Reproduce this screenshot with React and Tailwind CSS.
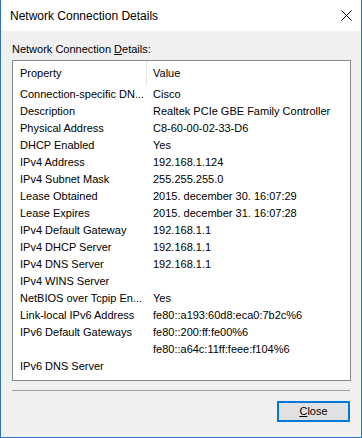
export default function App() {
  const rows = [
    ["Connection-specific DN...", "Cisco"],
    ["Description", "Realtek PCIe GBE Family Controller"],
    ["Physical Address", "C8-60-00-02-33-D6"],
    ["DHCP Enabled", "Yes"],
    ["IPv4 Address", "192.168.1.124"],
    ["IPv4 Subnet Mask", "255.255.255.0"],
    ["Lease Obtained", "2015. december 30. 16:07:29"],
    ["Lease Expires", "2015. december 31. 16:07:28"],
    ["IPv4 Default Gateway", "192.168.1.1"],
    ["IPv4 DHCP Server", "192.168.1.1"],
    ["IPv4 DNS Server", "192.168.1.1"],
    ["IPv4 WINS Server", ""],
    ["NetBIOS over Tcpip En...", "Yes"],
    ["Link-local IPv6 Address", "fe80::a193:60d8:eca0:7b2c%6"],
    ["IPv6 Default Gateways", "fe80::200:ff:fe00%6"],
    ["", "fe80::a64c:11ff:feee:f104%6"],
    ["IPv6 DNS Server", ""],
  ];
  return (
    <div
      className="w-[362px] h-[438px] flex flex-col bg-[#f0f0f0] border-l border-r border-b border-[#2f74c5] text-black"
      style={{ fontFamily: '"Liberation Sans", Arial, sans-serif' }}
    >
      <div className="h-[31px] bg-white flex items-center justify-between pl-[9px] pr-[9px] shrink-0">
        <span className="text-[12px] leading-none pt-[1px]">Network Connection Details</span>
        <svg width="11" height="11" viewBox="0 0 11 11" className="shrink-0">
          <path d="M0.5 0.5 L10.5 10.5 M10.5 0.5 L0.5 10.5" stroke="#000" strokeWidth="1" fill="none" />
        </svg>
      </div>
      <div className="flex flex-col pl-[11px] pr-[10px]">
        <div className="mt-[11px] h-[14px] text-[11px] leading-[14px]">
          Network Connection <span className="underline">D</span>etails:
        </div>
        <div className="mt-[4px] w-[339px] h-[321px] bg-white border border-[#828790] flex flex-col">
          <div className="h-[25px] flex items-center text-[11px] shrink-0">
            <div className="w-[134px] pl-[7px] h-full flex items-center border-r border-[#e5e5e5]">Property</div>
            <div className="pl-[6px]">Value</div>
          </div>
          {rows.map((r, i) => (
            <div key={i} className="h-[17px] flex items-center text-[11px] leading-[17px] shrink-0 whitespace-nowrap">
              <div className="w-[134px] pl-[7px]">{r[0]}</div>
              <div className="pl-[6px]">{r[1]}</div>
            </div>
          ))}
        </div>
        <div className="mt-[9px] w-[338px] h-[1px] bg-[#a0a0a0]"></div>
        <div className="w-[338px] flex justify-end mt-[10px]">
          <button className="w-[73px] h-[21px] bg-[#e1e1e1] border-2 border-[#0078d7] text-[11px] leading-none flex items-center justify-center">
            <span><span className="underline">C</span>lose</span>
          </button>
        </div>
      </div>
    </div>
  );
}
